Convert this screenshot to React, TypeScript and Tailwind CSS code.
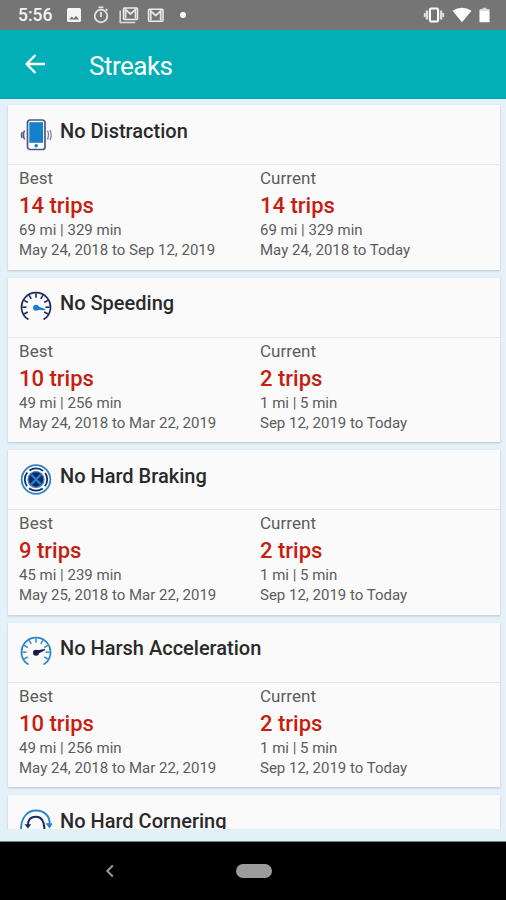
import type { ReactNode } from 'react';

interface Stat {
  trips: string;
  totals: string;
  range: string;
}

interface Streak {
  title: string;
  icon: ReactNode;
  best?: Stat;
  current?: Stat;
}

const NAVY = '#1c2c62';
const BLUE = '#1c7fcb';

function PhoneIcon() {
  return (
    <svg viewBox="0 0 32 32" className="h-8 w-8" fill="none">
      <rect x="7.5" y="1" width="17.5" height="29.5" rx="2.8" fill="#fff" stroke="#4c5684" strokeWidth="1.7" />
      <rect x="9.3" y="3.2" width="13.8" height="20.6" fill="#1580cc" />
      <circle cx="16.2" cy="26.7" r="1.8" fill={BLUE} />
      <path d="M4.5 11.5q-2 4.5 0 9M2.2 13q-1.4 3 0 6" stroke="#4c5684" strokeWidth="1.5" />
      <path d="M27.5 11.5q2 4.5 0 9M30 11q2.4 5 0 10" stroke="#7a82a5" strokeWidth="1.3" />
    </svg>
  );
}

const tickAngles = [-120, -90, -60, -30, 0, 30, 60, 90, 120];

interface GaugeIconProps {
  rim: string;
  ticks: string;
  hub: string;
  needle: string;
}

function GaugeIcon({ rim, ticks, hub, needle }: GaugeIconProps) {
  return (
    <svg viewBox="0 0 32 32" className="h-8 w-8" fill="none">
      <path d="M8.5 28.6A14.5 14.5 0 1 1 23.5 28.6" stroke={rim} strokeWidth="1.7" />
      {tickAngles.map((a) => (
        <path key={a} d="M16 2.5v4.2" transform={`rotate(${a} 16 16.2)`} stroke={ticks} strokeWidth="1.6" />
      ))}
      <circle cx="16" cy="16.8" r="3" fill={hub} />
      <path d={needle} fill={hub} />
    </svg>
  );
}

function BrakeIcon() {
  return (
    <svg viewBox="0 0 32 32" className="h-8 w-8" fill="none">
      <circle cx="16" cy="15.5" r="14.3" stroke="#2b84cb" strokeWidth="1.8" />
      <circle cx="16" cy="15.5" r="11.2" stroke={NAVY} strokeWidth="1.8" strokeDasharray="14.6 3" strokeDashoffset="7.3" />
      <circle cx="16" cy="15.5" r="7.9" fill="#14265c" stroke="#2b84cb" strokeWidth="1.4" />
      <path d="m11.3 10.8 9.4 9.4M20.7 10.8l-9.4 9.4" stroke="#2386d4" strokeWidth="2.2" />
    </svg>
  );
}

function CornerIcon() {
  return (
    <svg viewBox="0 0 32 32" className="h-8 w-8" fill="none">
      <path d="M1 22C.5 8 8 1.5 16 1.5S30.3 7 29.5 15" stroke="#2b84cb" strokeWidth="1.9" />
      <path d="m25.5 14.2 4 5.3 3.5-5.3z" fill="#2b84cb" />
      <path d="M8 16C8 9.5 11.5 7.8 16 7.8S24.5 11 24.5 22" stroke={NAVY} strokeWidth="2" />
      <path d="m4.5 15.2 3.5 4.3 3.2-4.3z" fill={NAVY} />
    </svg>
  );
}

const streaks: Streak[] = [
  {
    title: 'No Distraction',
    icon: <PhoneIcon />,
    best: { trips: '14 trips', totals: '69 mi | 329 min', range: 'May 24, 2018 to Sep 12, 2019' },
    current: { trips: '14 trips', totals: '69 mi | 329 min', range: 'May 24, 2018 to Today' },
  },
  {
    title: 'No Speeding',
    icon: <GaugeIcon rim={NAVY} ticks={NAVY} hub="#1c7fdb" needle="M16 14.8 25.2 17.9v1.4L16 18.8z" />,
    best: { trips: '10 trips', totals: '49 mi | 256 min', range: 'May 24, 2018 to Mar 22, 2019' },
    current: { trips: '2 trips', totals: '1 mi | 5 min', range: 'Sep 12, 2019 to Today' },
  },
  {
    title: 'No Hard Braking',
    icon: <BrakeIcon />,
    best: { trips: '9 trips', totals: '45 mi | 239 min', range: 'May 25, 2018 to Mar 22, 2019' },
    current: { trips: '2 trips', totals: '1 mi | 5 min', range: 'Sep 12, 2019 to Today' },
  },
  {
    title: 'No Harsh Acceleration',
    icon: <GaugeIcon rim="#2b84cb" ticks="#3f90d0" hub="#171b4b" needle="M16 14.5 25 12.9v1.4L17 18.3z" />,
    best: { trips: '10 trips', totals: '49 mi | 256 min', range: 'May 24, 2018 to Mar 22, 2019' },
    current: { trips: '2 trips', totals: '1 mi | 5 min', range: 'Sep 12, 2019 to Today' },
  },
  {
    title: 'No Hard Cornering',
    icon: <CornerIcon />,
  },
];

function StatColumn({ label, stat }: { label: string; stat: Stat }) {
  return (
    <div className="w-[241px] shrink-0 whitespace-nowrap text-[#5c5c5c]">
      <div className="h-[27px] text-[17px] leading-[26px] tracking-[0.05px]">{label}</div>
      <div className="h-[28px] text-[22px] font-medium leading-[28px] text-[#c5200f]">{stat.trips}</div>
      <div className="h-[20px] text-[15px] leading-[21px]">{stat.totals}</div>
      <div className="h-[20px] text-[15px] leading-[20px]">{stat.range}</div>
    </div>
  );
}

function StreakCard({ streak }: { streak: Streak }) {
  return (
    <section className="h-[164.5px] shrink-0 bg-[#fafafa] shadow-[0_1px_2px_rgba(90,90,130,0.3)]">
      <div className="flex h-[60px] border-b border-[#e6e6e9] pl-3 pt-[13.5px]">
        {streak.icon}
        <h2 className="ml-2 text-[20px] font-medium leading-[25px] text-[#2a2a2a]">{streak.title}</h2>
      </div>
      <div className="flex pl-[11px]">
        {streak.best && <StatColumn label="Best" stat={streak.best} />}
        {streak.current && <StatColumn label="Current" stat={streak.current} />}
      </div>
    </section>
  );
}

function StatusBar() {
  return (
    <div className="flex h-[30px] items-center bg-[#757575] pl-[18px] pr-[15px] text-white">
      <span className="mt-px w-[48px] text-[17.5px] font-medium leading-none text-[#f2f2f2]">5:56</span>
      <svg viewBox="0 0 16 16" className="h-4 w-4">
        <path fill="#f5f5f5" fillRule="evenodd" d="M2.5 1h11A1.5 1.5 0 0 1 15 2.500v11a1.5 1.5 0 0 1-1.5 1.5h-11A1.5 1.5 0 0 1 1 13.500v-11A1.5 1.5 0 0 1 2.500 1M3 12.500h10L10 8.800l-2.200 2.600-2-1.800z" />
      </svg>
      <svg viewBox="0 0 18 18" className="ml-[10px] h-[18px] w-[18px]" fill="none" stroke="#e4e4e4" strokeWidth="1.8">
        <circle cx="9" cy="10" r="6.3" />
        <path d="M6.5 1.3h5M9 6v5M14 4.5l1.3-1.3" />
      </svg>
      <svg viewBox="0 0 20 18" className="ml-[9px] h-[18px] w-5" fill="none">
        <path d="M1.2 4.5v12h15" stroke="#ddd" strokeWidth="1.5" />
        <rect x="4.5" y="2" width="14" height="11.5" rx="1" stroke="#eee" strokeWidth="1.5" />
        <path d="M6.5 12.5V3.5l5 4.5 5-4.500v9" stroke="#e4e4e4" strokeWidth="1.8" />
      </svg>
      <svg viewBox="0 0 18 16" className="ml-[8px] h-4 w-[18px]" fill="none">
        <rect x="1.5" y="2.3" width="14.5" height="12" rx="1" stroke="#eee" strokeWidth="1.5" />
        <path d="M3.700 13.500V4l5 4.500 5-4.500v9.500" stroke="#e4e4e4" strokeWidth="1.8" />
      </svg>
      <span className="ml-[15px] h-[6px] w-[6px] rounded-full bg-white" />
      <svg viewBox="0 0 22 18" className="ml-auto h-[18px] w-[22px]" fill="none">
        <rect x="7" y="2.5" width="8" height="13" rx="1" stroke="#fff" strokeWidth="2" />
        <path d="M4 4.5v9M18 4.5v9" stroke="#ddd" strokeWidth="2.6" />
        <path d="M1.8 7v4M20.2 7v4" stroke="#ddd" strokeWidth="2" />
      </svg>
      <svg viewBox="0 0 20 16" className="ml-[7px] h-4 w-5">
        <path fill="#fff" d="M.5 3.8Q10-2.2 19.5 3.8L10 15.2z" />
      </svg>
      <svg viewBox="0 0 12 16" className="ml-[7px] mr-px h-4 w-[11px]">
        <path fill="#ddd" d="M4 0h4v1.5h2.5q1 0 1 1V4H.5V2.500q0-1 1-1H4z" />
        <path fill="#fff" d="M.5 3.5h11V15q0 1-1 1h-9q-1 0-1-1z" />
      </svg>
    </div>
  );
}

export default function App() {
  return (
    <div className="flex h-[900px] w-[506px] flex-col overflow-hidden bg-[#e5f1f9] font-['Roboto',sans-serif]">
      <StatusBar />
      <header className="flex h-[69px] shrink-0 items-center border-b border-[#0aa0a7] bg-[#03afb7] pl-[25px] text-white">
        <svg viewBox="0 0 20 20" className="h-5 w-5" fill="none" stroke="#fff" strokeWidth="2.3">
          <path d="M20 10H2M10.5 1 1.6 10l8.9 9" />
        </svg>
        <h1 className="ml-11 mt-1 text-[26px] leading-none tracking-[-0.5px]">Streaks</h1>
      </header>

      <main className="flex h-[730px] shrink-0 flex-col gap-2 overflow-hidden pl-2 pr-[6px] pt-[6px]">
        {streaks.map((s) => (
          <StreakCard key={s.title} streak={s} />
        ))}
      </main>

      <div className="h-[13px] shrink-0 border-b border-[#6f8584] bg-[#e3f1f6]" />
      {/* Android navigation bar */}
      <nav className="grid h-[58px] shrink-0 grid-cols-[236px_36px] bg-black">
        <svg viewBox="0 0 10 14" className="ml-[105px] mt-[22px] h-[14px] w-[10px]" fill="none" stroke="#999" strokeWidth="2">
          <path d="M7.8 1.5 2.3 7l5.5 5.5" />
        </svg>
        <span className="mt-[22px] h-[14px] w-[36px] rounded-full bg-[#9b9b9b]" />
      </nav>
    </div>
  );
}
